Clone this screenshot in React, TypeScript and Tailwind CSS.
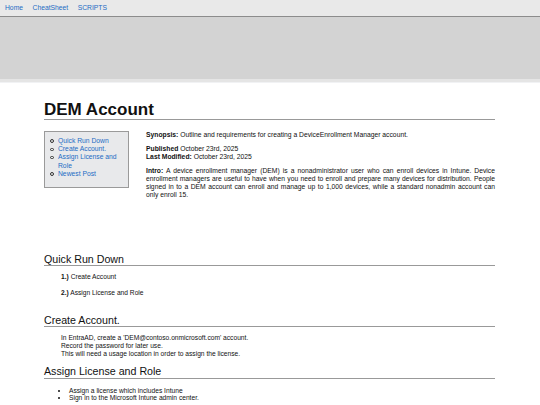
import React from 'react';

const navLinks = ['Home', 'CheatSheet', 'SCRIPTS'];
const tocLinks = ['Quick Run Down', 'Create Account.', 'Assign License and Role', 'Newest Post'];

const App = () => {
  return (
    <div className="min-h-screen bg-white text-[#111] font-['Liberation_Sans',Arial,sans-serif]">
      {/* Top nav */}
      <nav className="h-[17px] bg-[#e9e9e9] border-b border-[#8c8c8c] flex items-center gap-[9.5px] pl-[5px] text-[6.75px] leading-[8px]">
        {navLinks.map(link => (
          <a key={link} href="#" className="text-[#1d6cc4]">
            {link}
          </a>
        ))}
      </nav>

      {/* Banner */}
      <div className="h-[62px] bg-[#d3d3d3]"></div>
      <div className="h-[3px] bg-[#e5e5e5]"></div>
      <div className="h-[1px] bg-[#f1f2f4]"></div>

      <main className="w-[451px] ml-[44px] pb-8">
        <h1 className="mt-[18px] text-[17px] leading-[18px] font-bold border-b border-[#999]">DEM Account</h1>

        <div className="mt-[11px] flex items-start gap-[17px] text-[6.75px] leading-[7.7px]">
          {/* Table of contents */}
          <div className="w-[85px] shrink-0 border border-[#9a9a9a] bg-[#e8e9eb] pt-[5px] pb-[9px] pl-[4px] pr-[3px]">
            <ul className="leading-[8.2px]">
              {tocLinks.map(link => (
                <li key={link} className="flex items-start">
                  <span className="shrink-0 mt-[2.4px] ml-[1px] mr-[4.5px] w-[3.5px] h-[3.5px] rounded-full border-[0.8px] border-[#333]"></span>
                  <a href="#" className="text-[#1d6cc4]">
                    {link}
                  </a>
                </li>
              ))}
            </ul>
          </div>

          <div className="flex-1 text-justify">
            <p>
              <b>Synopsis:</b> Outline and requirements for creating a DeviceEnrollment Manager account.
            </p>
            <p className="mt-[6.67px]">
              <b>Published</b> October 23rd, 2025
              <br />
              <b>Last Modified:</b> October 23rd, 2025
            </p>
            <p className="mt-[6.67px] leading-[7.9px]">
              <b>Intro:</b> A device enrollment manager (DEM) is a nonadministrator user who can enroll devices in
              Intune. Device enrollment managers are useful to have when you need to enroll and prepare many devices
              for distribution. People signed in to a DEM account can enroll and manage up to 1,000 devices, while a
              standard nonadmin account can only enroll 15.
            </p>
          </div>
        </div>

        {/* Quick Run Down */}
        <h2 className="mt-[53.5px] text-[10.67px] leading-[12.27px] border-b border-[#999]">Quick Run Down</h2>
        <div className="pl-[17px] text-[6.67px] leading-[7.67px]">
          <p className="mt-[7px]">
            <b>1.)</b> Create Account
          </p>
          <p className="mt-[9px]">
            <b>2.)</b> Assign License and Role
          </p>
        </div>

        {/* Create Account */}
        <h2 className="mt-[17px] text-[10.67px] leading-[12.27px] border-b border-[#999]">Create Account.</h2>
        <p className="mt-[7px] pl-[17px] text-[6.67px] leading-[7.67px]">
          In EntraAD, create a 'DEM@contoso.onmicrosoft.com' account.
          <br />
          Record the password for later use.
          <br />
          This will need a usage location in order to assign the license.
        </p>

        {/* Assign License and Role */}
        <h2 className="mt-[8px] text-[10.67px] leading-[12.27px] border-b border-[#999]">Assign License and Role</h2>
        <ul className="mt-[8px] pl-[25px] list-disc text-[6.67px] leading-[7.67px]">
          <li>Assign a license which includes Intune</li>
          <li>Sign in to the Microsoft Intune admin center.</li>
        </ul>
      </main>
    </div>
  );
};

export default App;
